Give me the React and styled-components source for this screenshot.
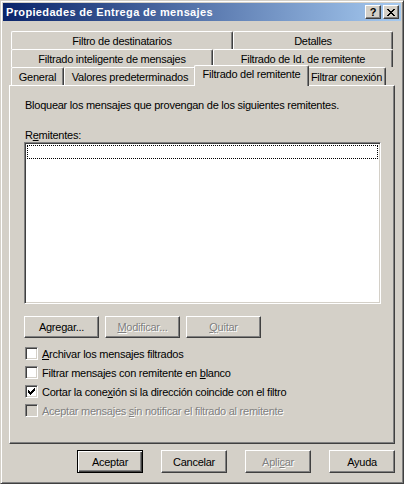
import React from 'react'
import styled, { createGlobalStyle, css } from 'styled-components'

const GlobalStyle = createGlobalStyle`
    html, body {
        margin: 0;
        padding: 0;
        background: #d4d0c8;
    }
    * {
        box-sizing: border-box;
    }
`

const raised = css`
    border: 1px solid;
    border-color: #fff #404040 #404040 #fff;
    box-shadow: inset -1px -1px #808080, inset 1px 1px #d4d0c8;
`

const sunken = css`
    border: 1px solid;
    border-color: #808080 #fff #fff #808080;
    box-shadow: inset 1px 1px #404040, inset -1px -1px #d4d0c8;
`

const CHECK = [
    '......X',
    '.....XX',
    'X...XXX',
    'XX.XXX.',
    'XXXXX..',
    '.XXX...',
    '..X....',
]

const CLOSE = [
    'XX....XX',
    '.XX..XX.',
    '..XXXX..',
    '...XX...',
    '..XXXX..',
    '.XX..XX.',
    'XX....XX',
]

const Pixels = ({ rows }) => (
    <svg width={rows[0].length} height={rows.length} shapeRendering='crispEdges'>
        {rows.map((r, y) =>
            r.split('').map((c, x) =>
                c === 'X' ? <rect key={`${x}-${y}`} x={x} y={y} width='1' height='1' fill='#000' /> : null
            )
        )}
    </svg>
)

const Window = styled.div`
    width: 404px;
    height: 484px;
    display: flex;
    flex-direction: column;
    padding: 2px;
    border: 1px solid;
    border-color: #d4d0c8 #404040 #404040 #d4d0c8;
    box-shadow: inset 1px 1px #fff, inset -1px -1px #808080;
    background: #d4d0c8;
    font-family: 'Liberation Sans', Arial, sans-serif;
    font-size: 11px;
    letter-spacing: -0.25px;
    color: #000;
`

const TitleBar = styled.div`
    height: 18px;
    margin-bottom: 1px;
    display: flex;
    align-items: center;
    padding: 0 2px 0 3px;
    background: linear-gradient(to right, #0a246a, #a6caf0);
`

const Title = styled.div`
    flex: 1;
    color: #fff;
    font-weight: bold;
    font-size: 11px;
    letter-spacing: 0.35px;
    white-space: nowrap;
`

const CaptionButtons = styled.div`
    display: flex;
    gap: 2px;
`

const CaptionButton = styled.div`
    width: 16px;
    height: 14px;
    display: flex;
    align-items: center;
    justify-content: center;
    background: #d4d0c8;
    font-weight: bold;
    font-size: 11px;
    line-height: 12px;
    ${raised}
`

const Client = styled.div`
    flex: 1;
    display: flex;
    flex-direction: column;
    padding: 9px 6px 8px;
`

const TabRow = styled.div`
    display: flex;
    height: 18px;
    padding-left: ${p => p.$indent}px;
    align-items: flex-start;
`

const Tab = styled.div`
    position: relative;
    width: ${p => p.$w}px;
    height: 18px;
    display: flex;
    justify-content: center;
    padding-top: 2px;
    line-height: 14px;
    white-space: nowrap;
    background: #d4d0c8;
    border-top: 1px solid #fff;
    border-left: 1px solid #fff;
    border-right: 1px solid #404040;
    border-radius: 2px 2px 0 0;
    box-shadow: inset -1px 0 #808080;
    ${p => p.$active && css`
        width: ${p.$w + 4}px;
        height: 21px;
        margin: -2px -2px 0;
        padding-top: 1px;
        z-index: 2;
    `}
`

const Panel = styled.div`
    height: 359px;
    display: flex;
    flex-direction: column;
    padding: 13px 13px 0 14px;
    border: 1px solid;
    border-color: #fff #404040 #404040 #fff;
    box-shadow: inset -1px -1px #808080;
`

const Text = styled.div`
    line-height: 13px;
    padding-left: 1px;
    white-space: nowrap;
`

const Intro = styled(Text)`
    margin-bottom: 17px;
`

const ListBox = styled.div`
    height: 162px;
    padding: 2px;
    background: #fff;
    ${sunken}
`

const FocusRow = styled.div`
    height: 14px;
    border: 1px dotted #000;
`

const ButtonRow = styled.div`
    display: flex;
    gap: ${p => p.$gap}px;
    justify-content: ${p => p.$end ? 'flex-end' : 'flex-start'};
`

const Button = styled.div`
    width: ${p => p.$w}px;
    height: ${p => p.$h}px;
    display: flex;
    align-items: center;
    justify-content: center;
    background: #d4d0c8;
    white-space: nowrap;
    ${raised}
    ${p => p.$default && css`
        border: 1px solid #000;
        box-shadow: inset 1px 1px #fff, inset -1px -1px #404040, inset -2px -2px #808080;
    `}
    ${p => p.$disabled && css`
        color: #808080;
        text-shadow: 1px 1px 0 #fff;
    `}
`

const Checks = styled.div`
    display: flex;
    flex-direction: column;
    margin-top: 6px;
`

const CheckRow = styled.div`
    height: 19px;
    display: flex;
    align-items: center;
    gap: 4px;
    padding-left: 1px;
    white-space: nowrap;
    ${p => p.$disabled && css`
        color: #808080;
        text-shadow: 1px 1px 0 #fff;
    `}
`

const Box = styled.div`
    width: 13px;
    height: 13px;
    display: flex;
    align-items: center;
    justify-content: center;
    background: ${p => p.$disabled ? '#d4d0c8' : '#fff'};
    ${sunken}
`

const U = styled.span`
    text-decoration: underline;
`

const Check = ({ checked, disabled, children }) => (
    <CheckRow $disabled={disabled}>
        <Box $disabled={disabled}>{checked && <Pixels rows={CHECK} />}</Box>
        <span>{children}</span>
    </CheckRow>
)

export default function App() {
    return (
        <>
            <GlobalStyle />
            <Window>
                <TitleBar>
                    <Title>Propiedades de Entrega de mensajes</Title>
                    <CaptionButtons>
                        <CaptionButton>?</CaptionButton>
                        <CaptionButton><Pixels rows={CLOSE} /></CaptionButton>
                    </CaptionButtons>
                </TitleBar>
                <Client>
                    <TabRow $indent={2}>
                        <Tab $w={222}>Filtro de destinatarios</Tab>
                        <Tab $w={160}>Detalles</Tab>
                    </TabRow>
                    <TabRow $indent={2}>
                        <Tab $w={202}>Filtrado inteligente de mensajes</Tab>
                        <Tab $w={180}>Filtrado de Id. de remitente</Tab>
                    </TabRow>
                    <TabRow $indent={2}>
                        <Tab $w={53}>General</Tab>
                        <Tab $w={132}>Valores predeterminados</Tab>
                        <Tab $w={111} $active>Filtrado del remitente</Tab>
                        <Tab $w={79}>Filtrar conexión</Tab>
                    </TabRow>
                    <Panel>
                        <Intro>Bloquear los mensajes que provengan de los siguientes remitentes.</Intro>
                        <Text>R<U>e</U>mitentes:</Text>
                        <ListBox>
                            <FocusRow />
                        </ListBox>
                        <ButtonRow $gap={6} style={{ marginTop: 12 }}>
                            <Button $w={75} $h={22}>A<U>g</U>regar...</Button>
                            <Button $w={75} $h={22} $disabled><U>M</U>odificar...</Button>
                            <Button $w={75} $h={22} $disabled><U>Q</U>uitar</Button>
                        </ButtonRow>
                        <Checks>
                            <Check><U>A</U>rchivar los mensajes filtrados</Check>
                            <Check>Filtrar mensajes con remitente en <U>b</U>lanco</Check>
                            <Check checked>Cortar la cone<U>x</U>ión si la dirección coincide con el filtro</Check>
                            <Check disabled>Aceptar mensajes <U>s</U>in notificar el filtrado al remitente</Check>
                        </Checks>
                    </Panel>
                    <ButtonRow $gap={18} $end style={{ marginTop: 6 }}>
                        <Button $w={66} $h={23} $default>Aceptar</Button>
                        <Button $w={66} $h={23}>Cancelar</Button>
                        <Button $w={66} $h={23} $disabled>Apli<U>c</U>ar</Button>
                        <Button $w={66} $h={23}>Ayuda</Button>
                    </ButtonRow>
                </Client>
            </Window>
        </>
    )
}
